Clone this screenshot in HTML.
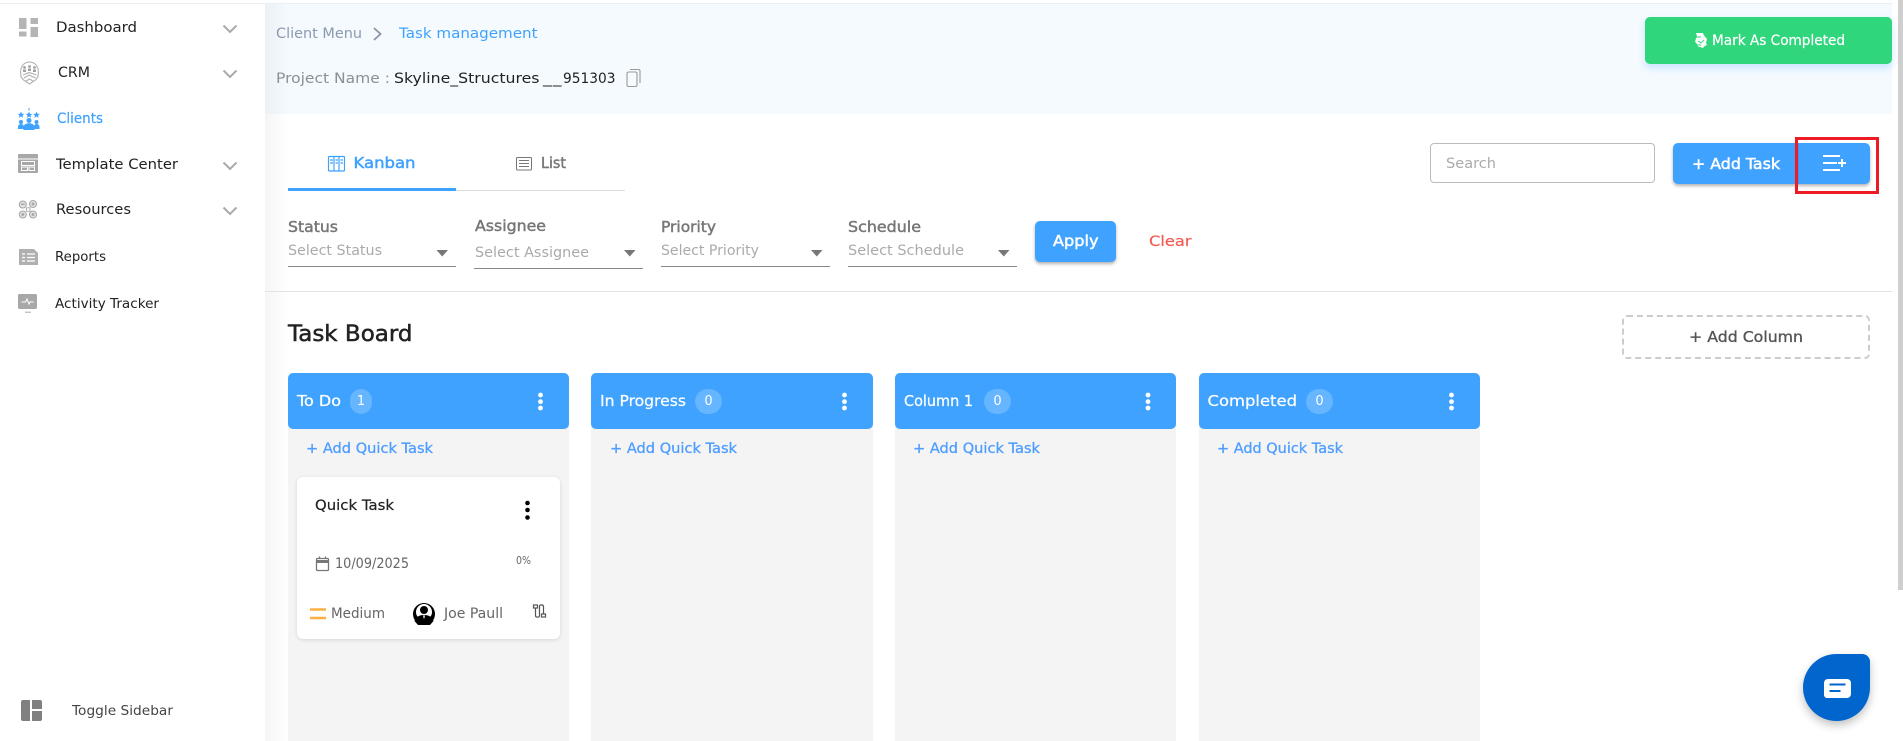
<!DOCTYPE html>
<html lang="en">
<head>
<meta charset="utf-8">
<title>Task management</title>
<style>
html,body{margin:0;padding:0;width:1903px;height:741px;overflow:hidden;background:#fff}
.b{position:absolute;box-sizing:border-box}
svg{position:absolute;left:0;top:0}
text{font-family:"DejaVu Sans","Liberation Sans",sans-serif;font-size:14.5px;fill:#222}
.w{fill:#fff}
.wm{fill:#fff;stroke:#fff;stroke-width:.5px;font-size:15px}
.blue{fill:#3fa2ff}
.bm{fill:#3fa2ff;stroke:#3fa2ff;stroke-width:.5px;font-size:15px}
.g{fill:#777;stroke:#777;stroke-width:.45px;font-size:15px}
.ph{fill:#aaa}
.t{fill:#666}
.q{fill:#4f9eff;stroke:#4f9eff;stroke-width:.3px}
</style>
</head>
<body>
<div class="b" style="left:0;top:3px;width:1892px;height:1px;background:#eceff2"></div>
<div class="b" style="left:265px;top:4px;width:1627px;height:110px;background:#f5faff"></div>
<div class="b" style="left:265px;top:4px;width:23px;height:737px;background:linear-gradient(90deg,rgba(0,0,0,.04),rgba(0,0,0,0))"></div>
<div class="b" style="left:1898px;top:0;width:5px;height:590px;background:#cfcfcf"></div>

<div class="b" style="left:1645px;top:17px;width:247px;height:47px;background:#2fd67b;border-radius:5px;box-shadow:0 4px 8px rgba(63,162,255,.25)"></div>
<div class="b" style="left:265px;top:291px;width:1627px;height:1px;background:#e3e3e3"></div>
<div class="b" style="left:288px;top:188px;width:168px;height:2.5px;background:#3fa2ff"></div>
<div class="b" style="left:456px;top:190px;width:169px;height:1px;background:#ddd"></div>

<div class="b" style="left:1430px;top:143px;width:225px;height:40px;border:1px solid #bbb;border-radius:4px;background:#fff"></div>
<div class="b" style="left:1673px;top:143px;width:197px;height:41px;background:#3fa2ff;border-radius:5px;box-shadow:0 2px 3px rgba(0,0,0,.3)"></div>
<div class="b" style="left:1798px;top:143px;width:1px;height:41px;background:#3a94e8"></div>

<div class="b" style="left:288px;top:266px;width:168px;height:1px;background:#888"></div>
<div class="b" style="left:474px;top:268px;width:169px;height:1px;background:#888"></div>
<div class="b" style="left:661px;top:266px;width:169px;height:1px;background:#888"></div>
<div class="b" style="left:848px;top:266px;width:169px;height:1px;background:#888"></div>
<div class="b" style="left:1035px;top:221px;width:81px;height:41px;background:#3fa2ff;border-radius:5px;box-shadow:0 2px 3px rgba(0,0,0,.3)"></div>

<div class="b" style="left:1622px;top:315px;width:248px;height:44px;border:2px dashed #ccc;border-radius:5px"></div>

<div class="b" style="left:288px;top:373px;width:281px;height:368px;background:#f4f4f4;border-radius:5px 5px 0 0"></div>
<div class="b" style="left:591px;top:373px;width:282px;height:368px;background:#f4f4f4;border-radius:5px 5px 0 0"></div>
<div class="b" style="left:895px;top:373px;width:281px;height:368px;background:#f4f4f4;border-radius:5px 5px 0 0"></div>
<div class="b" style="left:1199px;top:373px;width:281px;height:368px;background:#f4f4f4;border-radius:5px 5px 0 0"></div>
<div class="b" style="left:288px;top:373px;width:281px;height:56px;background:#3fa2ff;border-radius:5px"></div>
<div class="b" style="left:591px;top:373px;width:282px;height:56px;background:#3fa2ff;border-radius:5px"></div>
<div class="b" style="left:895px;top:373px;width:281px;height:56px;background:#3fa2ff;border-radius:5px"></div>
<div class="b" style="left:1199px;top:373px;width:281px;height:56px;background:#3fa2ff;border-radius:5px"></div>
<div class="b" style="left:350px;top:389px;width:22px;height:25px;background:#65b5ff;border-radius:12px"></div>
<div class="b" style="left:695px;top:389px;width:27px;height:25px;background:#65b5ff;border-radius:13px"></div>
<div class="b" style="left:984px;top:389px;width:27px;height:25px;background:#65b5ff;border-radius:13px"></div>
<div class="b" style="left:1306px;top:389px;width:27px;height:25px;background:#65b5ff;border-radius:13px"></div>

<div class="b" style="left:297px;top:477px;width:263px;height:162px;background:#fff;border-radius:6px;box-shadow:0 1px 4px rgba(0,0,0,.12)"></div>

<div class="b" style="left:1803px;top:654px;width:67px;height:67px;background:#0065cc;border-radius:34px 8px 34px 34px;box-shadow:0 4px 9px rgba(0,0,0,.25)"></div>

<svg width="1903" height="741" viewBox="0 0 1903 741" xmlns="http://www.w3.org/2000/svg">
  <!-- sidebar text -->
  <text x="56" y="32" textLength="81" lengthAdjust="spacingAndGlyphs">Dashboard</text>
  <text x="58" y="77" textLength="32" lengthAdjust="spacingAndGlyphs">CRM</text>
  <text x="57" y="123" textLength="46" lengthAdjust="spacingAndGlyphs" class="blue" style="stroke:#3fa2ff;stroke-width:.2px">Clients</text>
  <text x="56" y="169" textLength="122" lengthAdjust="spacingAndGlyphs">Template Center</text>
  <text x="56" y="214" textLength="75" lengthAdjust="spacingAndGlyphs">Resources</text>
  <text x="55" y="261" textLength="51" lengthAdjust="spacingAndGlyphs" style="font-size:13.500px">Reports</text>
  <text x="55" y="308" textLength="104" lengthAdjust="spacingAndGlyphs" style="font-size:13.500px">Activity Tracker</text>
  <text x="72" y="715" textLength="101" lengthAdjust="spacingAndGlyphs" style="font-size:13.500px;fill:#444">Toggle Sidebar</text>

  <!-- sidebar chevrons -->
  <g fill="none" stroke="#aaa" stroke-width="2">
    <path d="M223.500 25.500l6.500 6.500 6.500-6.500"/>
    <path d="M223.500 70.500l6.500 6.500 6.500-6.500"/>
    <path d="M223.500 162.500l6.500 6.500 6.500-6.500"/>
    <path d="M223.500 207.500l6.500 6.500 6.500-6.500"/>
  </g>

  <!-- dashboard icon -->
  <g fill="#b4b4b4">
    <rect x="19" y="18" width="7.500" height="11"/>
    <rect x="19" y="31.500" width="7.500" height="5"/>
    <rect x="30.500" y="18" width="7.500" height="6"/>
    <rect x="30.500" y="27" width="7.500" height="10"/>
  </g>
  <!-- crm icon -->
  <g fill="none" stroke="#b0b0b0" stroke-width="1.100">
    <path d="M21 76c-1.500-8 1.500-13.500 8.500-14 7 .5 10 6 8.500 14"/>
    <path d="M20.500 76l3 4 6 4 6-4 3-4"/>
    <path d="M23 75l6-2.500 7.500 2.500M24 78l5-3 6.500 3M26 81l3.500-2 3.500 2"/>
  </g>
  <g fill="#a0a0a0">
    <circle cx="24.500" cy="67.500" r="1.400"/><circle cx="29.500" cy="66.500" r="1.400"/><circle cx="34.500" cy="67.500" r="1.400"/>
    <rect x="23" y="69.500" width="3" height="2.500"/><rect x="28" y="68.500" width="3" height="2.500"/><rect x="33" y="69.500" width="3" height="2.500"/>
  </g>
  <!-- clients icon -->
  <g fill="#3fa2ff">
    <path d="M21 111.500l1 2.200 2.300.2-1.700 1.500.5 2.300-2.100-1.200-2.100 1.200.5-2.300-1.700-1.500 2.300-.2z"/>
    <path d="M29 111.500l1 2.200 2.300.2-1.700 1.500.5 2.300-2.100-1.200-2.100 1.200.5-2.300-1.700-1.500 2.300-.2z"/>
    <path d="M36.500 111.500l1 2.200 2.300.2-1.700 1.500.5 2.300-2.100-1.200-2.100 1.200.5-2.300-1.700-1.500 2.300-.2z"/>
    <rect x="28.500" y="108" width="1" height="2.500"/>
    <circle cx="21" cy="122" r="2"/><circle cx="36.500" cy="122" r="2"/><circle cx="29" cy="120.500" r="2.500"/>
    <path d="M18 129v-2c0-2 1.500-3 3-3s3 1 3 3v2zM34 129v-2c0-2 1-3 2.500-3s3 1 3 3v2z"/>
    <path d="M23.500 130v-2.500c0-3 2.500-4.300 5.500-4.300s5.500 1.300 5.500 4.300v2.500z"/>
  </g>
  <!-- template icon -->
  <rect x="18" y="154" width="20" height="19" rx="1" fill="#a8a8a8"/>
  <g fill="none" stroke="#fff" stroke-width="1">
    <path d="M18 159h20"/>
    <rect x="21.500" y="161.500" width="13" height="4"/>
    <rect x="21.500" y="167" width="6" height="3.500"/>
    <rect x="29" y="167" width="5.500" height="3.500"/>
  </g>
  <!-- resources icon -->
  <g fill="#e2e2e2" stroke="#a8a8a8" stroke-width="1.100">
    <circle cx="22.800" cy="204.500" r="3.500"/><circle cx="33" cy="204" r="3.500"/>
    <circle cx="22.800" cy="214.500" r="3.500"/><circle cx="33" cy="214.500" r="3.500"/>
  </g>
  <g fill="#a8a8a8">
    <rect x="21" y="203.500" width="3.600" height="1.500"/><circle cx="33" cy="204" r="1.500"/>
    <circle cx="22.800" cy="214.500" r="1.500"/><circle cx="33" cy="214.500" r="1.500"/>
  </g>
  <rect x="26.500" y="207.800" width="3.500" height="3.500" fill="#fff" stroke="#a8a8a8" stroke-width=".9"/>
  <!-- reports icon -->
  <path d="M19 249h15l4 4v12H19z" fill="#b0b0b0"/>
  <g stroke="#fff" stroke-width="1.300">
    <path d="M22 254h3M27 254h8M22 257.500h3M27 257.500h8M22 261h3M27 261h8"/>
  </g>
  <!-- activity icon -->
  <rect x="18" y="294" width="19" height="15" rx="1.500" fill="#a8a8a8"/>
  <path d="M21.500 302h4l1.500-3 2 5 1-2h3.500" fill="none" stroke="#fff" stroke-width="1"/>
  <rect x="25" y="311.500" width="6" height="1.500" fill="#c4c4c4"/>
  <!-- toggle icon -->
  <g fill="#808080">
    <path d="M23 700h7v21h-7a2 2 0 0 1-2-2v-17a2 2 0 0 1 2-2z"/>
    <path d="M32 700h8a2 2 0 0 1 2 2v7H32z"/>
    <path d="M32 711h10v8a2 2 0 0 1-2 2h-8z"/>
  </g>

  <!-- breadcrumb -->
  <text x="276" y="38" textLength="86" lengthAdjust="spacingAndGlyphs" style="fill:#8a9aaf">Client Menu</text>
  <path d="M374 28l6.500 6-6.500 6" fill="none" stroke="#8a96a6" stroke-width="1.800"/>
  <text x="399" y="38" textLength="138.500" lengthAdjust="spacingAndGlyphs" class="blue">Task management</text>
  <text x="276" y="83" textLength="114" lengthAdjust="spacingAndGlyphs" style="fill:#8a8f98">Project Name :</text>
  <text x="394" y="83" textLength="145.500" lengthAdjust="spacingAndGlyphs">Skyline_Structures</text>
  <text x="543" y="83" textLength="9" lengthAdjust="spacingAndGlyphs">_</text>
  <text x="553" y="83" textLength="8.500" lengthAdjust="spacingAndGlyphs">_</text>
  <text x="563" y="83" textLength="52.500" lengthAdjust="spacingAndGlyphs">951303</text>
  <g fill="none" stroke="#999" stroke-width="1.100">
    <rect x="627" y="72" width="10" height="14.500" rx="1.500"/>
    <path d="M630 69.500h8.500a1.500 1.500 0 0 1 1.500 1.500v12"/>
  </g>

  <!-- mark as completed -->
  <path d="M1696 33h7l1 2.500 3 3.500-1 4 1 2-3 1.500-1 1.500-3-1-2-.5-1-2.500-2-2.500 1-3 1-2z" fill="#fff"/>
  <path d="M1696 37h5M1698 41l3 2 3-3M1697 45h4" fill="none" stroke="#2fd67b" stroke-width=".9"/>
  <text x="1712" y="45" textLength="133" lengthAdjust="spacingAndGlyphs" class="w" style="stroke:#fff;stroke-width:.2px">Mark As Completed</text>

  <!-- tabs -->
  <g fill="none" stroke="#3fa2ff" stroke-width="1.200">
    <rect x="328.500" y="156.500" width="16" height="14.500" rx="1"/>
    <path d="M334 156.500v14.500M339 156.500v14.500"/>
    <path d="M330 160h3M330 163h3M335.500 160h2.500M335.500 163h2.500M340.500 160h2.500M340.500 163h2.500"/>
  </g>
  <text x="353.500" y="168" textLength="62" lengthAdjust="spacingAndGlyphs" class="bm">Kanban</text>
  <g fill="none" stroke="#777" stroke-width="1">
    <rect x="516.500" y="157.500" width="15" height="12.500" rx="1"/>
    <path d="M519 160.500h10M519 163.500h10M519 166.500h10"/>
  </g>
  <text x="541" y="168" textLength="25" lengthAdjust="spacingAndGlyphs" class="g">List</text>

  <!-- search + add task -->
  <text x="1446" y="168" textLength="50" lengthAdjust="spacingAndGlyphs" class="ph">Search</text>
  <text x="1692" y="169" textLength="88" lengthAdjust="spacingAndGlyphs" class="wm">+ Add Task</text>
  <g stroke="#fff" stroke-width="2" fill="none">
    <path d="M1823 156h17M1823 163h14M1823 170h17"/>
    <path d="M1838 163h8M1842 159v8"/>
  </g>
  <rect x="1796.500" y="138.500" width="81" height="54" fill="none" stroke="#ed1c24" stroke-width="3"/>

  <!-- filters -->
  <text x="288" y="232" textLength="50" lengthAdjust="spacingAndGlyphs" class="g">Status</text>
  <text x="475" y="231" textLength="71" lengthAdjust="spacingAndGlyphs" class="g">Assignee</text>
  <text x="661" y="232" textLength="55" lengthAdjust="spacingAndGlyphs" class="g">Priority</text>
  <text x="848" y="232" textLength="73" lengthAdjust="spacingAndGlyphs" class="g">Schedule</text>
  <text x="288" y="255" textLength="94" lengthAdjust="spacingAndGlyphs" class="ph">Select Status</text>
  <text x="475" y="257" textLength="114" lengthAdjust="spacingAndGlyphs" class="ph">Select Assignee</text>
  <text x="661" y="255" textLength="98" lengthAdjust="spacingAndGlyphs" class="ph">Select Priority</text>
  <text x="848" y="255" textLength="116" lengthAdjust="spacingAndGlyphs" class="ph">Select Schedule</text>
  <g fill="#777">
    <path d="M436.500 250h11.500l-5.750 6.500z"/>
    <path d="M624 250h11.500l-5.750 6.500z"/>
    <path d="M811 250h11.500l-5.750 6.500z"/>
    <path d="M998 250h11.500l-5.750 6.500z"/>
  </g>
  <text x="1053" y="246" textLength="45.500" lengthAdjust="spacingAndGlyphs" class="wm">Apply</text>
  <text x="1149" y="246" textLength="42.500" lengthAdjust="spacingAndGlyphs" style="fill:#f55b52;stroke:#f55b52;stroke-width:.2px">Clear</text>

  <!-- board head -->
  <text x="288" y="341" textLength="124.500" lengthAdjust="spacingAndGlyphs" style="font-size:22px;fill:#222;stroke:#222;stroke-width:.5px">Task Board</text>
  <text x="1689" y="342" textLength="114" lengthAdjust="spacingAndGlyphs" style="font-size:15px;fill:#555;stroke:#555;stroke-width:.35px">+ Add Column</text>

  <!-- column heads -->
  <text x="297" y="406" textLength="44" lengthAdjust="spacingAndGlyphs" class="w" style="font-size:15.500px;stroke:#fff;stroke-width:.25px">To Do</text>
  <text x="600" y="406" textLength="86" lengthAdjust="spacingAndGlyphs" class="w" style="font-size:15.500px;stroke:#fff;stroke-width:.25px">In Progress</text>
  <text x="904" y="406" textLength="69" lengthAdjust="spacingAndGlyphs" class="w" style="font-size:15.500px;stroke:#fff;stroke-width:.25px">Column 1</text>
  <text x="1207.500" y="406" textLength="89.500" lengthAdjust="spacingAndGlyphs" class="w" style="font-size:15.500px;stroke:#fff;stroke-width:.25px">Completed</text>
  <text x="361" y="405" text-anchor="middle" class="w" style="font-size:13px">1</text>
  <text x="708.500" y="405" text-anchor="middle" class="w" style="font-size:13px">0</text>
  <text x="997.500" y="405" text-anchor="middle" class="w" style="font-size:13px">0</text>
  <text x="1319.500" y="405" text-anchor="middle" class="w" style="font-size:13px">0</text>
  <g fill="#fff">
    <circle cx="540.500" cy="395" r="2.400"/><circle cx="540.500" cy="401.700" r="2.400"/><circle cx="540.500" cy="408" r="2.400"/>
    <circle cx="844.500" cy="395" r="2.400"/><circle cx="844.500" cy="401.700" r="2.400"/><circle cx="844.500" cy="408" r="2.400"/>
    <circle cx="1148" cy="395" r="2.400"/><circle cx="1148" cy="401.700" r="2.400"/><circle cx="1148" cy="408" r="2.400"/>
    <circle cx="1451.500" cy="395" r="2.400"/><circle cx="1451.500" cy="401.700" r="2.400"/><circle cx="1451.500" cy="408" r="2.400"/>
  </g>
  <text x="306" y="453" textLength="127" lengthAdjust="spacingAndGlyphs" class="q">+ Add Quick Task</text>
  <text x="610" y="453" textLength="127" lengthAdjust="spacingAndGlyphs" class="q">+ Add Quick Task</text>
  <text x="913" y="453" textLength="127" lengthAdjust="spacingAndGlyphs" class="q">+ Add Quick Task</text>
  <text x="1217" y="453" textLength="126" lengthAdjust="spacingAndGlyphs" class="q">+ Add Quick Task</text>

  <!-- card -->
  <text x="315" y="510" textLength="79" lengthAdjust="spacingAndGlyphs" style="fill:#222;stroke:#222;stroke-width:.2px">Quick Task</text>
  <g fill="#000">
    <circle cx="527.500" cy="503" r="2.300"/><circle cx="527.500" cy="510" r="2.300"/><circle cx="527.500" cy="517.500" r="2.300"/>
  </g>
  <g fill="none" stroke="#777">
    <rect x="316.500" y="558.500" width="12" height="12" rx="1" stroke-width="1.300"/>
    <path d="M316.500 561.500h12" stroke-width="3"/>
    <path d="M319.500 556.500v2M325.500 556.500v2" stroke-width="1.300"/>
  </g>
  <text x="335" y="568" textLength="74" lengthAdjust="spacingAndGlyphs" class="t">10/09/2025</text>
  <text x="516" y="564" textLength="15" lengthAdjust="spacingAndGlyphs" class="t" style="font-size:10.500px">0%</text>
  <g stroke="#fbb040" stroke-width="2.500"><path d="M310 609.500h16M310 618h16"/></g>
  <text x="331" y="618" textLength="54" lengthAdjust="spacingAndGlyphs" class="t">Medium</text>
  <circle cx="424" cy="614" r="11" fill="#000"/>
  <circle cx="424" cy="612" r="8" fill="#fff"/>
  <circle cx="424" cy="610" r="4" fill="#000"/>
  <path d="M414.500 621c1-4 4.500-6 9.500-6s8.500 2 9.500 6l-3.500 4h-12z" fill="#000"/>
  <path d="M423 615.500h2l-1 4z" fill="#fff"/>
  <text x="444" y="618" textLength="59" lengthAdjust="spacingAndGlyphs" class="t">Joe Paull</text>
  <g fill="none" stroke="#555" stroke-width="1.200">
    <path d="M535.500 608v7.500c0 2.200 4 2.200 4 0v-9c0-2.200 4-2.200 4 0v7.500"/>
    <rect x="533.500" y="605" width="4" height="3"/>
    <rect x="541.500" y="614" width="4" height="3"/>
  </g>

  <!-- chat -->
  <path d="M1828 679h19a4 4 0 0 1 4 4v11a4 4 0 0 1-4 4h-21l-2-2v-13a4 4 0 0 1 4-4z" fill="#fff"/>
  <path d="M1829.500 684.500h16M1829.500 691h11" stroke="#0065cc" stroke-width="2" fill="none"/>
</svg>
</body>
</html>
